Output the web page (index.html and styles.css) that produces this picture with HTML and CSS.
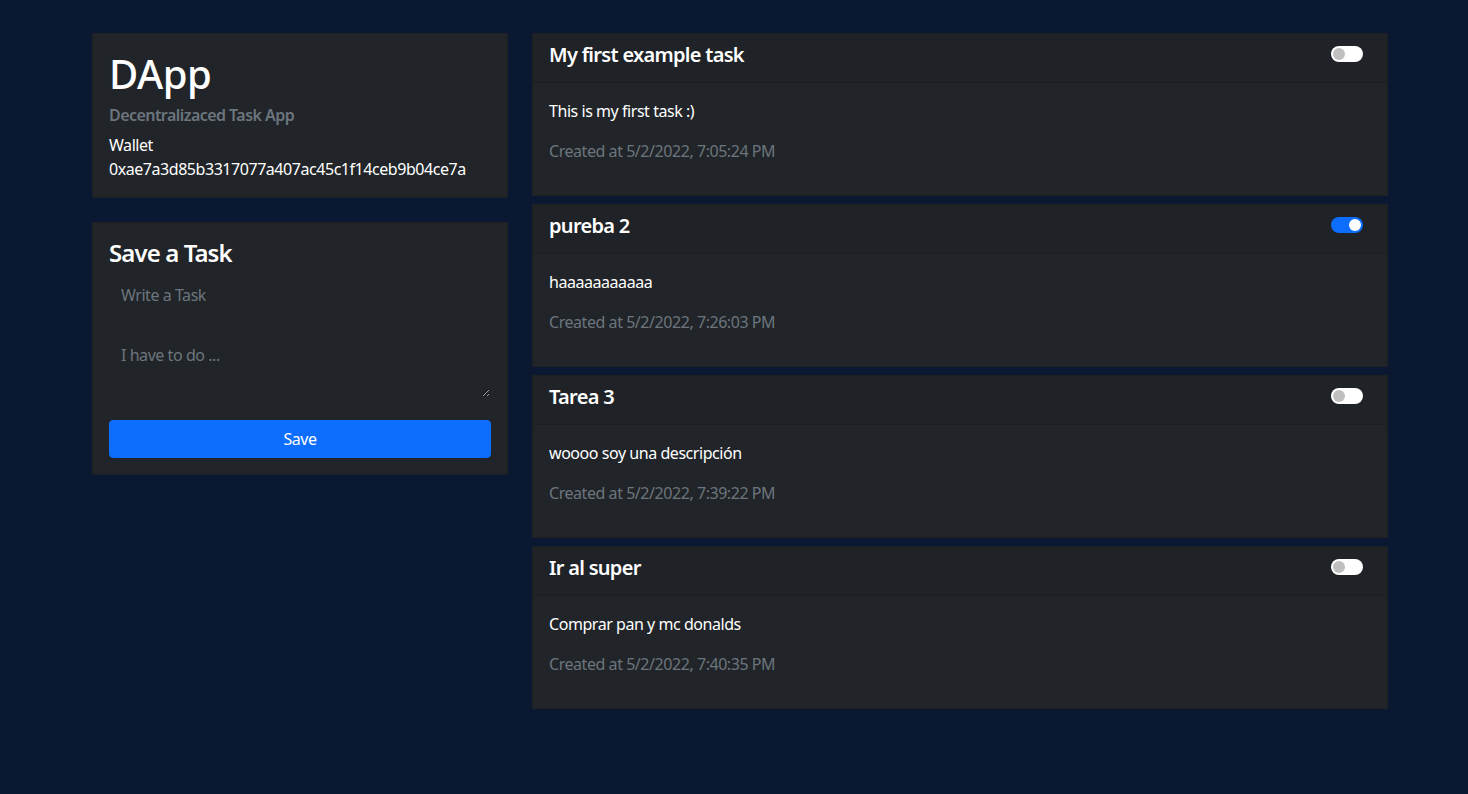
FILE: index.html
```html
<!DOCTYPE html>
<html lang="en">
<head>
<meta charset="utf-8">
<title>DApp</title>
<link rel="stylesheet" href="styles.css">
</head>
<body>
<div class="app">
  <aside class="side">
    <section class="card intro">
      <h1 class="brand">DApp</h1>
      <h6 class="subtitle">Decentralizaced Task App</h6>
      <p class="wallet">Wallet<br>0xae7a3d85b3317077a407ac45c1f14ceb9b04ce7a</p>
    </section>
    <section class="card form-card">
      <h3 class="form-title">Save a Task</h3>
      <form class="task-form">
        <input class="field" type="text" placeholder="Write a Task">
        <textarea class="field area" rows="2" placeholder="I have to do ..."></textarea>
        <button class="btn" type="button">Save</button>
      </form>
    </section>
  </aside>
  <main class="tasks">
    <article class="card task">
      <header class="task-head">
        <h5 class="task-title">My first example task</h5>
        <span class="switch"></span>
      </header>
      <div class="task-body">
        <p class="task-desc">This is my first task :)</p>
        <p class="task-date">Created at 5/2/2022, 7:05:24 PM</p>
      </div>
    </article>
    <article class="card task">
      <header class="task-head">
        <h5 class="task-title">pureba 2</h5>
        <span class="switch on"></span>
      </header>
      <div class="task-body">
        <p class="task-desc">haaaaaaaaaaa</p>
        <p class="task-date">Created at 5/2/2022, 7:26:03 PM</p>
      </div>
    </article>
    <article class="card task">
      <header class="task-head">
        <h5 class="task-title">Tarea 3</h5>
        <span class="switch"></span>
      </header>
      <div class="task-body">
        <p class="task-desc">woooo soy una descripción</p>
        <p class="task-date">Created at 5/2/2022, 7:39:22 PM</p>
      </div>
    </article>
    <article class="card task">
      <header class="task-head">
        <h5 class="task-title">Ir al super</h5>
        <span class="switch"></span>
      </header>
      <div class="task-body">
        <p class="task-desc">Comprar pan y mc donalds</p>
        <p class="task-date">Created at 5/2/2022, 7:40:35 PM</p>
      </div>
    </article>
  </main>
</div>
</body>
</html>
```

FILE: styles.css
```css
* { box-sizing: border-box; }

html, body {
  margin: 0;
  background: #0a1931;
  color: #fff;
  font-family: "Noto Sans", "Open Sans", sans-serif;
  font-size: 16px;
  line-height: 1.5;
  letter-spacing: -0.45px;
}

.app {
  display: flex;
  gap: 24px;
  width: 1388px;
  padding: 33px 0 0 92px;
  align-items: flex-start;
}

.side {
  width: 416px;
  flex: none;
  display: flex;
  flex-direction: column;
  gap: 24px;
}

.tasks {
  width: 856px;
  flex: none;
  display: flex;
  flex-direction: column;
  gap: 8px;
}

.card {
  background: #212529;
  border: 1px solid rgba(0, 0, 0, 0.125);
}

.intro { padding: 16px; }

.brand {
  margin: 0 0 8px;
  font-size: 40px;
  line-height: 48px;
  font-weight: 500;
  letter-spacing: -0.5px;
}

.subtitle {
  margin: 0 0 8px;
  font-size: 16px;
  line-height: 19.2px;
  font-weight: 600;
  color: #6c757d;
  letter-spacing: -0.55px;
}

.wallet { margin: 0; }

.form-card { padding: 16px; }

.form-title {
  margin: 0 0 8px;
  font-size: 24px;
  line-height: 28.8px;
  font-weight: 600;
  letter-spacing: -0.9px;
}

.task-form {
  display: flex;
  flex-direction: column;
  gap: 22px;
}

.field {
  display: block;
  width: 100%;
  height: 38px;
  padding: 6px 11px;
  font: inherit;
  letter-spacing: -0.45px;
  color: #fff;
  background: #212529;
  border: 1px solid #212529;
  border-radius: 4px;
  outline: none;
  color-scheme: dark;
}

.field::placeholder { color: #6c757d; opacity: 1; }

.area {
  height: 62px;
  resize: vertical;
}

.btn {
  height: 38px;
  font: inherit;
  letter-spacing: -0.45px;
  color: #fff;
  background: #0d6efd;
  border: 1px solid #0d6efd;
  border-radius: 4px;
}

.task-head {
  display: flex;
  justify-content: space-between;
  align-items: flex-start;
  padding: 8px 24px 8px 16px;
  background: rgba(0, 0, 0, 0.03);
  border-bottom: 1px solid rgba(0, 0, 0, 0.125);
}

.task-title {
  margin: 1px 0 7px;
  font-size: 20px;
  line-height: 24px;
  font-weight: 600;
  letter-spacing: -0.7px;
}

.switch {
  position: relative;
  width: 32px;
  height: 16px;
  margin-top: 4px;
  border-radius: 8px;
  background: #fff;
  flex: none;
}

.switch::after {
  content: "";
  position: absolute;
  top: 2px;
  left: 2px;
  width: 12px;
  height: 12px;
  border-radius: 50%;
  background: #bfbfbf;
}

.switch.on { background: #0d6efd; }
.switch.on::after { left: 18px; background: #fff; }

.task-body { padding: 16px; }

.task-desc { margin: 0 0 16px; }

.task-date {
  margin: 0 0 16px;
  color: #6c757d;
}
```
